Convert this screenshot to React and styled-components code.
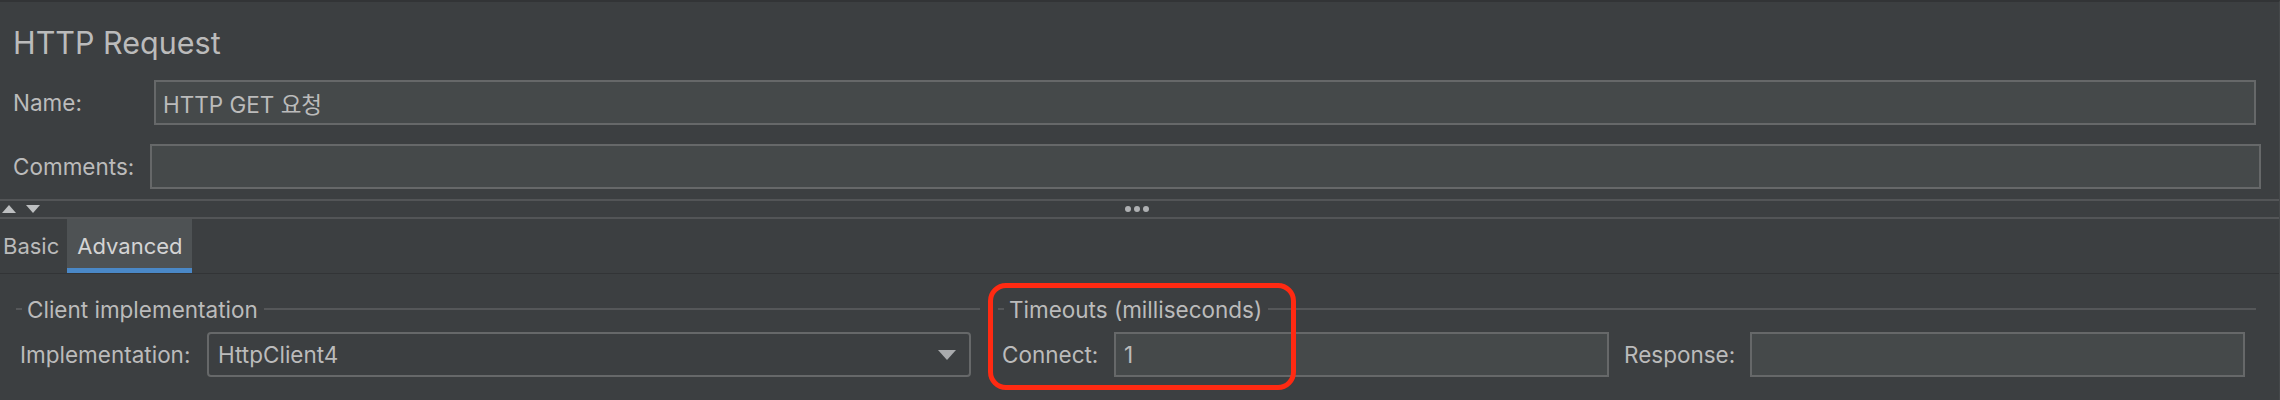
import React from "react";
import styled, { createGlobalStyle } from "styled-components";

const GlobalStyle = createGlobalStyle`
  html, body { margin: 0; padding: 0; background: #3c3f41; }
  body { font-family: Inter, "Liberation Sans", "Noto Sans CJK KR", sans-serif; }
  * { box-sizing: border-box; }
`;

const Page = styled.div`
  position: relative;
  width: 2280px;
  height: 400px;
  background: #3c3f41;
  border-top: 2px solid #323436;
  border-right: 1px solid #45484a;
  color: #bbbbbb;
  overflow: hidden;
`;

const Header = styled.div`
  display: flex;
  flex-direction: column;
  padding-left: 13px;
`;

const Title = styled.div`
  margin-top: 24px;
  font-size: 30.5px;
  line-height: 34px;
  color: #bbbbbb;
`;

const FieldRow = styled.div`
  display: flex;
  align-items: center;
  height: 45px;
  margin-top: ${(p) => p.$mt}px;
  margin-right: ${(p) => p.$mr}px;
`;

const Label = styled.span`
  flex: none;
  width: ${(p) => p.$w}px;
  margin-left: ${(p) => p.$gap || 0}px;
  margin-right: ${(p) => p.$gap || 0}px;
  font-size: 22.5px;
  color: #bbbbbb;
  white-space: nowrap;
`;

const TextInput = styled.div`
  flex: 1;
  height: 45px;
  display: flex;
  align-items: center;
  padding: 0 7px;
  background: #45494a;
  border: 2px solid #666869;
  font-size: 22.5px;
  color: #bbbbbb;
  white-space: nowrap;
`;

const Splitter = styled.div`
  margin-top: 10px;
  height: 20px;
  border-top: 2px solid #535557;
  border-bottom: 2px solid #535557;
  display: flex;
  align-items: center;
  position: relative;
`;

const Arrows = styled.div`
  display: flex;
  gap: 10px;
  padding-left: 2px;
`;

const Dots = styled.div`
  position: absolute;
  left: 1125px;
  top: 5px;
  display: flex;
  gap: 3px;
`;

const Dot = styled.span`
  width: 6px;
  height: 6px;
  border-radius: 50%;
  background: #aeb0b2;
`;

const TabBar = styled.div`
  display: flex;
  height: 55px;
  border-bottom: 1px solid #323436;
`;

const Tab = styled.div`
  display: flex;
  align-items: center;
  padding: 4px ${(p) => (p.$active ? "9px 0 10px" : "8px 0 3px")};
  font-size: 22px;
  color: ${(p) => (p.$active ? "#d4d4d4" : "#bbbbbb")};
  background: ${(p) => (p.$active ? "#4e5254" : "transparent")};
  border-bottom: 5px solid ${(p) => (p.$active ? "#4a88c7" : "transparent")};
`;

const Panel = styled.div`
  display: flex;
  padding-top: 22px;
`;

const Group = styled.div`
  display: flex;
  flex-direction: column;
  width: ${(p) => p.$w}px;
  margin-left: ${(p) => p.$ml}px;
`;

const GroupTitle = styled.div`
  display: flex;
  align-items: center;
  height: 26px;
  font-size: 22.5px;
  color: #bbbbbb;
`;

const TitleLine = styled.span`
  height: 2px;
  background: #555759;
  flex: ${(p) => (p.$grow ? 1 : "none")};
  width: ${(p) => (p.$grow ? "auto" : "6px")};
`;

const TitleText = styled.span`
  padding: 0 6px 0 5px;
  white-space: nowrap;
`;

const GroupBody = styled.div`
  display: flex;
  align-items: center;
  margin-top: 10px;
  padding: 0 ${(p) => p.$pr}px 0 4px;
`;

const Combo = styled.div`
  flex: 1;
  height: 45px;
  display: flex;
  align-items: center;
  justify-content: space-between;
  padding: 0 13px 0 9px;
  border: 2px solid #666869;
  border-radius: 4px;
  font-size: 22.5px;
  color: #bbbbbb;
`;

const Field = styled(TextInput)`
  flex: none;
  width: ${(p) => p.$w}px;
  padding-left: 8px;
`;

const Highlight = styled.div`
  position: absolute;
  left: 988px;
  top: 281px;
  width: 308px;
  height: 107px;
  border: 5px solid #ff2a12;
  border-radius: 18px;
  pointer-events: none;
`;

const Triangle = ({ up }) => (
  <svg width="14" height="8" viewBox="0 0 14 8">
    <path d={up ? "M0 8 L7 0 L14 8 Z" : "M0 0 L14 0 L7 8 Z"} fill="#bdbfc1" />
  </svg>
);

export default function App() {
  return (
    <>
      <GlobalStyle />
      <Page>
        <Header>
          <Title>HTTP Request</Title>
          <FieldRow $mt={20} $mr={23}>
            <Label $w={141}>Name:</Label>
            <TextInput>HTTP GET 요청</TextInput>
          </FieldRow>
          <FieldRow $mt={19} $mr={18}>
            <Label $w={137}>Comments:</Label>
            <TextInput />
          </FieldRow>
        </Header>
        <Splitter>
          <Arrows>
            <Triangle up />
            <Triangle />
          </Arrows>
          <Dots>
            <Dot />
            <Dot />
            <Dot />
          </Dots>
        </Splitter>
        <TabBar>
          <Tab>Basic</Tab>
          <Tab $active>Advanced</Tab>
        </TabBar>
        <Panel>
          <Group $w={964} $ml={16}>
            <GroupTitle>
              <TitleLine />
              <TitleText>Client implementation</TitleText>
              <TitleLine $grow />
            </GroupTitle>
            <GroupBody $pr={9}>
              <Label $w={187}>Implementation:</Label>
              <Combo>
                <span>HttpClient4</span>
                <svg width="18" height="10" viewBox="0 0 18 10">
                  <path d="M0 0 L18 0 L9 10 Z" fill="#a9abad" />
                </svg>
              </Combo>
            </GroupBody>
          </Group>
          <Group $w={1258} $ml={18}>
            <GroupTitle>
              <TitleLine />
              <TitleText>Timeouts (milliseconds)</TitleText>
              <TitleLine $grow />
            </GroupTitle>
            <GroupBody $pr={11}>
              <Label $w={112}>Connect:</Label>
              <Field $w={495}>1</Field>
              <Label $w={111} $gap={15}>Response:</Label>
              <Field $w={495} />
            </GroupBody>
          </Group>
        </Panel>
        <Highlight />
      </Page>
    </>
  );
}
